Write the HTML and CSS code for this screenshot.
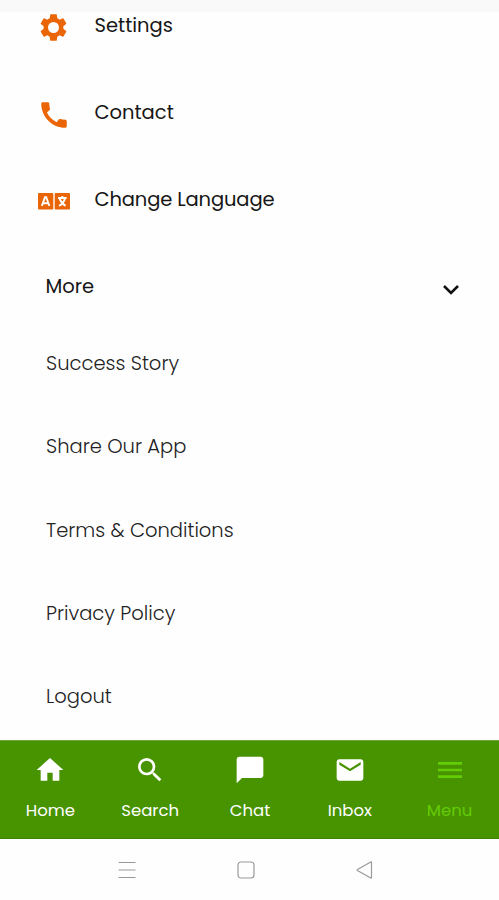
FILE: index.html
```html
<!DOCTYPE html>
<html lang="en">
<head>
<meta charset="utf-8">
<title>Menu</title>
<link rel="stylesheet" href="styles.css">
</head>
<body>
<div class="screen">
  <header class="topbar"></header>
  <main class="content">
    <ul class="menu">
      <li class="row">
        <svg class="icon gear" viewBox="0 0 24 24"><path d="M19.14 12.94c.04-.3.06-.61.06-.94s-.02-.64-.07-.94l2.03-1.58a.49.49 0 0 0 .12-.61l-1.92-3.32a.49.49 0 0 0-.59-.22l-2.39.96a7 7 0 0 0-1.62-.94L14.4 2.81a.48.48 0 0 0-.48-.41h-3.84a.47.47 0 0 0-.47.41l-.36 2.54a7.4 7.4 0 0 0-1.62.94l-2.39-.96a.48.48 0 0 0-.59.22L2.74 8.87a.47.47 0 0 0 .12.61l2.03 1.58a6 6 0 0 0-.02 1.88l-2.03 1.58a.49.49 0 0 0-.12.61l1.92 3.32c.12.22.37.29.59.22l2.39-.96c.5.38 1.03.7 1.62.94l.36 2.54c.05.24.24.41.48.41h3.84c.24 0 .44-.17.47-.41l.36-2.54a7 7 0 0 0 1.62-.94l2.39.96c.22.08.47 0 .59-.22l1.92-3.32a.47.47 0 0 0-.12-.61zM12 16a4 4 0 1 1 0-8 4 4 0 0 1 0 8z"/></svg>
        <span>Settings</span>
      </li>
      <li class="row">
        <svg class="icon phone" viewBox="0 0 24 24"><path d="M20.01 15.38c-1.23 0-2.42-.2-3.53-.56a.98.98 0 0 0-1.01.24l-1.57 1.97a15.1 15.1 0 0 1-6.89-6.83l1.95-1.66c.27-.28.35-.67.24-1.02A11.2 11.2 0 0 1 8.64 4c0-.55-.45-1-.99-1H4.19C3.65 3 3 3.24 3 3.99 3 13.28 10.73 21 20.01 21c.71 0 .99-.63.99-1.18v-3.45c0-.54-.45-.99-.99-.99z"/></svg>
        <span>Contact</span>
      </li>
      <li class="row">
        <svg class="icon language" viewBox="0 0 32 17"><rect width="15.3" height="16.6" rx="1"/><rect x="16.7" width="15.3" height="16.6" rx="1"/><g class="cut"><path d="M3.8 13 7 4.2h1.2L11.4 13M5.2 10.2h4.8"/><path d="M20 5h8.6M24.3 3v2M27 5.3c-.8 3.4-3 6-6 7.6M21.6 5.6c1 3 3.2 5.6 6 7.3"/></g></svg>
        <span class="change">Change Language</span>
      </li>
      <li class="row more">
        <span>More</span>
        <svg class="chevron" viewBox="0 0 18 12"><path d="m2 2 7 7 7-7"/></svg>
      </li>
    </ul>
    <ul class="submenu">
      <li class="sub">Success Story</li>
      <li class="sub">Share Our App</li>
      <li class="sub">Terms &amp; Conditions</li>
      <li class="sub">Privacy Policy</li>
      <li class="sub">Logout</li>
    </ul>
  </main>
  <nav class="tabs">
    <a class="tab"><svg viewBox="0 0 24 24"><path d="M10 20v-6h4v6h5v-8h3L12 3 2 12h3v8z"/></svg><span>Home</span></a>
    <a class="tab"><svg viewBox="0 0 24 24"><path d="M15.5 14h-.79l-.28-.27A6.47 6.47 0 0 0 16 9.5 6.5 6.5 0 1 0 9.5 16c1.61 0 3.09-.59 4.23-1.57l.27.28v.79l5 4.99L20.49 19zm-6 0a4.500 4.500 0 1 1 0-9 4.500 4.500 0 0 1 0 9z"/></svg><span>Search</span></a>
    <a class="tab"><svg viewBox="0 0 24 24"><path d="M20 2H4c-1.100 0-2 .9-2 2v18l4-4h14c1.100 0 2-.9 2-2V4c0-1.100-.9-2-2-2z"/></svg><span>Chat</span></a>
    <a class="tab"><svg viewBox="0 0 24 24"><path d="M20 4H4c-1.100 0-2 .9-2 2v12c0 1.100.9 2 2 2h16c1.100 0 2-.9 2-2V6c0-1.100-.9-2-2-2zm0 4-8 5-8-5V6l8 5 8-5z"/></svg><span>Inbox</span></a>
    <a class="tab active"><svg viewBox="0 0 24 24"><path d="M3 18h18v-2H3zm0-5h18v-2H3zm0-7v2h18V6z"/></svg><span>Menu</span></a>
  </nav>
  <footer class="system">
    <svg viewBox="0 0 18 18"><path d="M.5 1.500h17M.5 9h17M.5 16.500h17"/></svg>
    <svg viewBox="0 0 18 18"><rect x="1" y="1" width="16" height="16" rx="3"/></svg>
    <svg viewBox="0 0 18 18"><path d="M15.500 1.300v15.400q0 .6-.7.200L1.400 9.400q-.6-.4 0-.8L14.800 1.100q.7-.4.700.2z"/></svg>
  </footer>
</div>
</body>
</html>
```
FILE: styles.css
```css
* { box-sizing: border-box; }
body {
  margin: 0;
  background: #fefefe;
  color: #161616;
  font-family: Poppins, Inter, "Open Sans", sans-serif;
}
ul { margin: 0; padding: 0; list-style: none; }
.screen { display: flex; flex-direction: column; height: 900px; overflow: hidden; }
.topbar { height: 12px; background: #f9f9f9; flex: none; }
.content { height: 728px; flex: none; }
.menu { display: flex; flex-direction: column; gap: 59px; }
.row {
  display: grid;
  grid-template-columns: 33px 1fr;
  grid-template-rows: 28px;
  column-gap: 24.500px;
  align-items: center;
  height: 28px;
  padding-left: 37px;
  font-size: 19.500px;
  line-height: 28px;
}
.icon { justify-self: center; fill: #ea6506; margin-top: 3px; }
.gear { width: 33px; height: 33px; }
.phone { width: 34px; height: 34px; }
.language { width: 32px; height: 17px; }
.change { letter-spacing: -0.13px; }
.cut { fill: none; stroke: #fff; stroke-width: 1.9; }
.more { grid-template-columns: 1fr 18px; padding: 0 39px 0 45.500px; }
.chevron { width: 18px; height: 12px; fill: none; stroke: #111; stroke-width: 2.6; margin-top: 5px; }
.submenu { display: flex; flex-direction: column; gap: 55.3px; margin-top: 49px; padding-left: 46px; }
.sub { height: 28px; line-height: 28px; font-size: 19.500px; font-weight: 300; color: #222; }
.tabs {
  display: grid;
  grid-template-columns: repeat(5, 1fr);
  height: 99px;
  flex: none;
  background: #489300;
  border-top: 1px solid #6ca63a;
  border-bottom: 1px solid #3c8500;
}
.tab { display: flex; flex-direction: column; align-items: center; padding: 13px 0 0 1px; color: #fff; font-size: 16.500px; line-height: 24px; }
.tab svg { width: 32px; height: 32px; fill: currentColor; margin-bottom: 13px; }
.active { color: #63cc05; }
.system { flex: 1; display: flex; justify-content: center; gap: 101px; padding: 22px 7px 0 0; }
.system svg { width: 18px; height: 18px; fill: none; stroke: #999; stroke-width: 1.2; }
```
